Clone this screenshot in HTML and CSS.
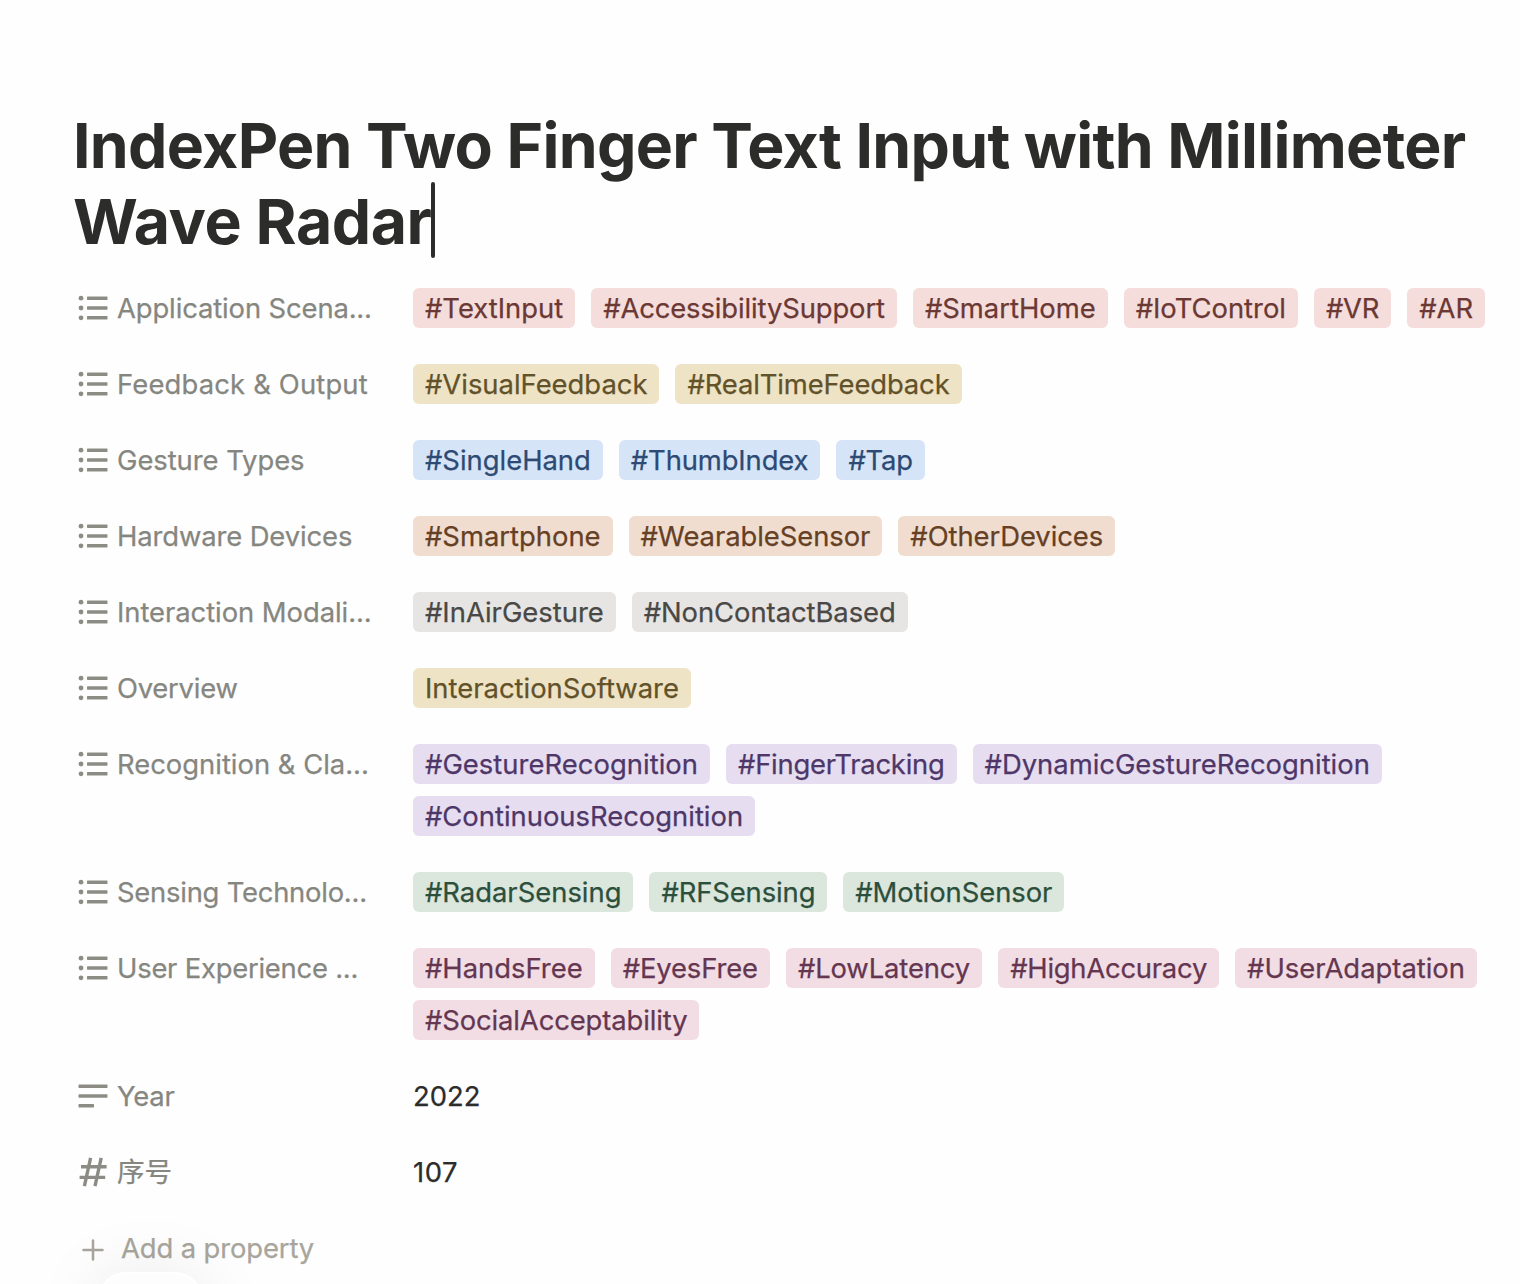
FILE: index.html
```html
<!DOCTYPE html>
<html lang="en">
<head>
<meta charset="utf-8">
<title>IndexPen</title>
<link rel="stylesheet" href="styles.css">
</head>
<body>
<svg class="defs" width="0" height="0">
  <symbol id="list" viewBox="0 0 30 26"><g fill="currentColor"><circle cx="3" cy="3.2" r="2.4"/><circle cx="3" cy="13" r="2.4"/><circle cx="3" cy="22.8" r="2.4"/><rect x="9" y="1.5" width="20.5" height="3.4" rx=".6"/><rect x="9" y="11.3" width="20.5" height="3.4" rx=".6"/><rect x="9" y="21.1" width="20.5" height="3.4" rx=".6"/></g></symbol>
</svg>
<main class="page">
  <h1 class="title">IndexPen Two Finger Text Input with Millimeter<br><span class="line2">Wave Radar</span><span class="caret"></span></h1>
  <section class="props">
    <div class="row"><div class="name"><svg class="icon"><use href="#list"/></svg><span class="tight">Application Scen<span class="tighter">a...</span></span></div><div class="tags red"><span>#TextInput</span><span class="tight">#AccessibilitySupport</span><span>#SmartHome</span><span>#IoTControl</span><span class="tighter">#VR</span><span>#AR</span></div></div>
    <div class="row"><div class="name"><svg class="icon"><use href="#list"/></svg><span class="loose">Feedback &amp; Output</span></div><div class="tags yellow"><span>#VisualFeedback</span><span class="tight">#RealTimeFeedback</span></div></div>
    <div class="row"><div class="name"><svg class="icon"><use href="#list"/></svg><span class="snug">Gesture Types</span></div><div class="tags blue"><span>#SingleHand</span><span class="tight">#ThumbIndex</span><span class="tighter">#Tap</span></div></div>
    <div class="row"><div class="name"><svg class="icon"><use href="#list"/></svg><span class="tight">Hardware Devices</span></div><div class="tags orange"><span>#Smartphone</span><span class="snug">#WearableSensor</span><span class="snug">#OtherDevices</span></div></div>
    <div class="row"><div class="name"><svg class="icon"><use href="#list"/></svg><span class="snug">Interaction Modali...</span></div><div class="tags gray"><span>#InAirGesture</span><span class="snug">#NonContactBased</span></div></div>
    <div class="row"><div class="name"><svg class="icon"><use href="#list"/></svg><span class="tighter">Overview</span></div><div class="tags yellow"><span>InteractionSoftware</span></div></div>
    <div class="row"><div class="name"><svg class="icon"><use href="#list"/></svg><span>Recognition &amp; Cla...</span></div><div class="tags purple"><span class="open">#GestureRecognition</span><span class="tighter">#FingerTracking</span><span>#DynamicGestureRecognition</span><span>#ContinuousRecognition</span></div></div>
    <div class="row"><div class="name"><svg class="icon"><use href="#list"/></svg><span class="tighter">Sensing Technolo...</span></div><div class="tags green"><span>#RadarSensing</span><span class="tight">#RFSensing</span><span class="snug">#MotionSensor</span></div></div>
    <div class="row"><div class="name"><svg class="icon"><use href="#list"/></svg><span class="tighter">User Experience ...</span></div><div class="tags pink"><span>#HandsFree</span><span class="tight">#EyesFree</span><span class="tight">#LowLatency</span><span class="tighter">#HighAccuracy</span><span>#UserAdaptation</span><span class="tight">#SocialAcceptability</span></div></div>
    <div class="row"><div class="name"><svg class="icon" viewBox="0 0 30 26"><g fill="currentColor"><rect x=".5" y="1.5" width="29" height="3.4" rx=".6"/><rect x=".5" y="11.3" width="29" height="3.4" rx=".6"/><rect x=".5" y="21.1" width="15.5" height="3.4" rx=".6"/></g></svg><span class="tighter">Year</span></div><div class="value">2022</div></div>
    <div class="row"><div class="name"><svg class="icon hash" viewBox="0 0 30 30"><path d="M12.6.8 6.4 29.2M23.2.8 17 29.2M3 9.8h25.6M1.6 20.4h25.6" fill="none" stroke="currentColor" stroke-width="3.4"/></svg><span class="cjk">序号</span></div><div class="value open2">107</div></div>
  </section>
  <div class="add"><svg class="plus" viewBox="0 0 22 22"><path d="M11 1.5v19M1.5 11h19" stroke="currentColor" stroke-width="2.5" stroke-linecap="round"/></svg><span class="tight">Add a property</span></div>
</main>
<div class="popup"></div>
</body>
</html>
```
FILE: styles.css
```css
html, body { margin: 0; height: 1284px; overflow: hidden; }
body { position: relative; background: #fefefe; color: #2c2c2b; font-family: Inter, "Noto Sans CJK SC", sans-serif; }
.defs { position: absolute; }
.page { padding: 107px 20px 0 73px; }
.title { margin: 0; font-size: 62.5px; line-height: 76px; font-weight: 700; letter-spacing: -0.68px; white-space: nowrap; }
.line2 { letter-spacing: -0.45px; }
.caret { display: inline-block; width: 4px; height: 76px; border-radius: 2px; background: #2c2c2b; vertical-align: top; margin: -1px 0 0 -1px; }
.props { display: flex; flex-direction: column; gap: 36px; margin-top: 29px; }
.row { display: flex; align-items: flex-start; font-size: 27.4px; line-height: 40px; white-space: nowrap; -webkit-text-stroke: 0.25px currentColor; }
.name { display: flex; align-items: center; gap: 9px; width: 335px; height: 40px; padding-left: 5px; color: #868680; flex: none; }
.icon { width: 30px; height: 26px; color: #8c8c84; flex: none; }
.hash { height: 30px; }
.cjk { font-family: "Noto Sans CJK SC", sans-serif; font-size: 27.6px; padding-bottom: 4px; }
.loose { letter-spacing: 0.17px; }
.open { letter-spacing: 0.04px; }
.open2 { letter-spacing: 0.5px; }
.snug { letter-spacing: -0.05px; }
.tight { letter-spacing: -0.11px; }
.tighter { letter-spacing: -0.23px; }
.tags { display: flex; flex-wrap: wrap; gap: 12px 16px; }
.tags span { padding: 0 12px; height: 40px; border-radius: 6px; }
.red span { background: #f5dddc; color: #6b3833; }
.yellow span { background: #efe3c5; color: #62522a; }
.blue span { background: #d5e4f7; color: #2d4a74; }
.orange span { background: #f0ddd0; color: #664024; }
.gray span { background: #e6e5e3; color: #494846; }
.purple span { background: #e6ddf0; color: #4e3768; }
.green span { background: #dbe6dd; color: #2c4f3c; }
.pink span { background: #f2dde4; color: #643650; }
.add { display: flex; align-items: center; gap: 17px; height: 40px; margin-top: 36px; padding-left: 9px; font-size: 27.4px; color: #a8a59c; -webkit-text-stroke: 0.25px currentColor; }
.plus { width: 22px; height: 22px; margin-top: 4px; }
.popup { position: absolute; left: 98px; top: 1272px; width: 105px; height: 60px; border-radius: 28px; background: #fdfdfd; border: 2px solid #fff; box-sizing: border-box; box-shadow: 0 8px 72px rgba(0,0,0,.11); }
```
